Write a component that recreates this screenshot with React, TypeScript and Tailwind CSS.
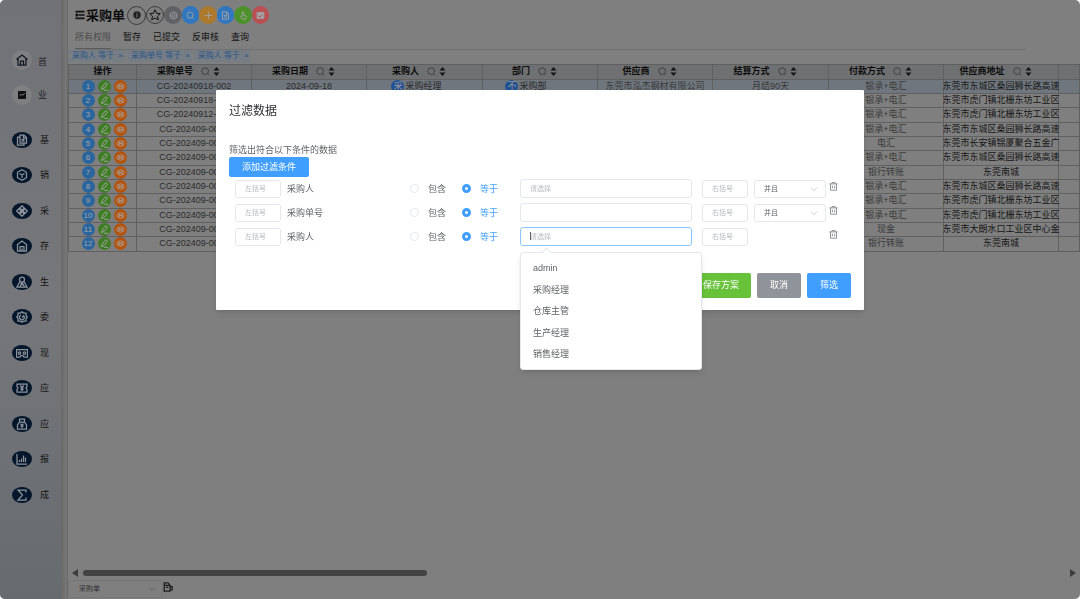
import { useState } from 'react'
import type { ReactNode } from 'react'

const rows: {
  code: string
  date?: string
  buyer?: string
  dept?: string
  supplier?: string
  settle?: string
  pay: string
  address: string
}[] = [
  {
    code: 'CG-20240918-002',
    date: '2024-09-18',
    buyer: '采购经理',
    dept: '采购部',
    supplier: '东莞市泓杰钢材有限公司',
    settle: '月结90天',
    pay: '银承+电汇',
    address: '东莞市东城区桑园狮长路高速',
  },
  { code: 'CG-20240918-001', pay: '银承+电汇', address: '东莞市虎门镇北栅东坊工业区' },
  { code: 'CG-20240912-001', pay: '银承+电汇', address: '东莞市虎门镇北栅东坊工业区' },
  { code: 'CG-202409-0009', pay: '银承+电汇', address: '东莞市东城区桑园狮长路高速' },
  { code: 'CG-202409-0008', pay: '电汇', address: '东莞市长安镇锦厦聚合五金广' },
  { code: 'CG-202409-0007', pay: '银承+电汇', address: '东莞市东城区桑园狮长路高速' },
  { code: 'CG-202409-0006', pay: '银行转账', address: '东莞南城' },
  { code: 'CG-202409-0005', pay: '银承+电汇', address: '东莞市东城区桑园狮长路高速' },
  { code: 'CG-202409-0004', pay: '银承+电汇', address: '东莞市虎门镇北栅东坊工业区' },
  { code: 'CG-202409-0003', pay: '银承+电汇', address: '东莞市虎门镇北栅东坊工业区' },
  { code: 'CG-202409-0002', pay: '现金', address: '东莞市大朗水口工业区中心金' },
  { code: 'CG-202409-0001', pay: '银行转账', address: '东莞南城' },
]

const columns = ['采购单号', '采购日期', '采购人', '部门', '供应商', '结算方式', '付款方式', '供应商地址']

const tabs = ['所有权限', '暂存', '已提交', '反审核', '查询']

const tags = ['采购人 等于', '采购单号 等于', '采购人 等于']

const menu: { label: string; icon: ReactNode }[] = [
  {
    label: '基',
    icon: (
      <>
        <path d="M8 2h8l5 5v11H8zM15 2v6h6M8 6H3v16h13v-4" />
        <path d="M11 11h6M11 14h6" />
      </>
    ),
  },
  { label: '销', icon: <path d="M12 1.5l9 5v11l-9 5-9-5v-11zM7 9l5 3 5-3M12 12v6" /> },
  {
    label: '采',
    icon: (
      <path d="M12 1.5L16.5 6 12 10.5 7.5 6zM12 13.5l4.5 4.5-4.5 4.5L7.5 18zM6 7.5l4.5 4.5L6 16.5 1.500 12zM18 7.5l4.5 4.5-4.5 4.5-4.5-4.5z" />
    ),
  },
  { label: '存', icon: <path d="M3 22V9l9-7 9 7v13zM8 22v-9h8v9M12 17v5" /> },
  {
    label: '生',
    icon: (
      <>
        <circle cx="12" cy="7" r="5" />
        <path d="M8 11L2 22h20l-6-11M12 12l-4 10M12 12l5 10M10 17h5" />
      </>
    ),
  },
  {
    label: '委',
    icon: (
      <>
        <path d="M12 1.500l3 2.500h5v5l2.500 3L20 15v5h-5l-3 2.500L9 20H4v-5l-2.500-3L4 9V4h5z" />
        <path d="M16 10a5 5 0 1 1-6-2M12 13l4-4" />
      </>
    ),
  },
  {
    label: '现',
    icon: (
      <>
        <path d="M1 5h22v15h-7l-2-3h-4l-2 3H1z" />
        <circle cx="7" cy="12" r="2.500" />
        <circle cx="17" cy="12" r="2.500" />
      </>
    ),
  },
  { label: '应', icon: <path d="M2 4h20v5l-2 3 2 3v5H2v-5l2-3-2-3zM8.500 7L12 11l3.500-4M12 11v7M9 12h6M9 15h6" /> },
  { label: '应', icon: <path d="M7 2h10v6H7zM7 8l-4 6v8h18v-8l-4-6M9 11l3 4 3-4M12 15v5M9 16h6" /> },
  { label: '报', icon: <path d="M2 2v20h20M7 18v-4M11 18v-7M15 18V5M19 18V9" /> },
  { label: '成', icon: <path d="M20 7V2H4l9 10-9 10h16v-5" /> },
]

const tools: { name: string; tone: string; icon: ReactNode }[] = [
  {
    name: '设置',
    tone: 'bg-[#5f6165]',
    icon: (
      <>
        <path d="M12 2l8.500 5v10L12 22l-8.500-5V7z" />
        <circle cx="12" cy="12" r="4" />
      </>
    ),
  },
  { name: '搜索', tone: 'bg-[#3077bf]', icon: <path d="M11 3a8 8 0 1 1 0 16 8 8 0 0 1 0-16M17 17l4 4" /> },
  { name: '新增', tone: 'bg-[#ac792d]', icon: <path d="M12 2v20M2 12h20" /> },
  { name: '单据', tone: 'bg-[#3077bf]', icon: <path d="M4 2h11l5 5v15H4zM14 2v6h6M8 12h8M8 16h8" /> },
  {
    name: '提交',
    tone: 'bg-[#4c912a]',
    icon: <path d="M9 14V4a2 2 0 0 1 4 0v7l6 2v5l-2 4H9l-5-7 2-2z" />,
  },
  {
    name: '关闭',
    tone: 'bg-[#b85054]',
    icon: (
      <>
        <path d="M3 4h18v16H3z" fill="currentColor" />
        <path d="M7 13l4 3 6-6" stroke="#b85054" />
      </>
    ),
  },
]

const options = ['admin', '采购经理', '仓库主管', '生产经理', '销售经理']

const conditions = [
  { field: '采购人', placeholder: '请选择', join: true, open: false },
  { field: '采购单号', placeholder: '', join: true, open: false },
  { field: '采购人', placeholder: '请选择', join: false, open: true },
]

function Icon({ className, width = 2, children }: { className: string; width?: number; children: ReactNode }) {
  return (
    <svg
      className={className}
      viewBox="0 0 24 24"
      fill="none"
      stroke="currentColor"
      strokeWidth={width}
      aria-hidden="true"
    >
      {children}
    </svg>
  )
}

function Sidebar() {
  return (
    <nav className="w-[61px] shrink-0 bg-linear-to-b from-[#707277] via-[#76777a] to-[#666b70] pt-[42px] text-[9px] text-[#222]">
      <a href="#home" className="flex h-[35px] items-center pl-3">
        <span className="flex size-5 items-center justify-center rounded-full bg-[#7e7f81] text-[#111820]">
          <Icon className="size-3" width={2.5}>
            <path d="M1 11L12 2l11 9M4 9v13h16V9M9 22v-8h6v8" />
          </Icon>
        </span>
        <span className="ml-1.5 pt-1.5">首</span>
      </a>
      <a href="#business" className="flex h-[35px] items-center pl-3">
        <span className="flex size-5 items-center justify-center rounded-full bg-[#7e7f81] text-[#808080]">
          <svg className="size-2" viewBox="0 0 24 24" aria-hidden="true">
            <rect width="24" height="24" rx="2" fill="#111" />
            <path d="M5 14l5-4 4 3 6-6" fill="none" stroke="currentColor" strokeWidth="3" />
          </svg>
        </span>
        <span className="ml-1.5 pt-0.5">业</span>
      </a>
      <div className="mt-[10px]">
        {menu.map((item, i) => (
          <a key={i} href={`#menu-${i}`} className="flex h-9 items-center pl-3 text-[#151515] odd:h-[35px]">
            <span className="flex h-4 w-5 items-center justify-center rounded-[50%] bg-[#04162b] text-[#8d939b]">
              <Icon className="size-3" width={2.5}>
                {item.icon}
              </Icon>
            </span>
            <span className="ml-2 pt-0.5">{item.label}</span>
          </a>
        ))}
      </div>
    </nav>
  )
}

function Toolbar() {
  return (
    <header className="px-[7px] pt-[5px]">
      <div className="flex h-5 items-center">
        <Icon className="size-[10px] text-[#111]" width={4}>
          <path d="M1 4h22M9 12h14M1 20h22M2 9l4 3-4 3" />
        </Icon>
        <h1 className="ml-px pt-px text-[13px] leading-5 font-bold text-[#0b0b0b]">采购单</h1>
        <div className="ml-0.5 flex items-center">
          <button
            type="button"
            aria-label="说明"
            className="flex size-[19px] items-center justify-center rounded-full border border-[#3c3c3c]"
          >
            <svg className="size-2" viewBox="0 0 24 24" aria-hidden="true">
              <circle cx="12" cy="12" r="11" fill="#202020" />
              <path d="M12 10v9M12 5v3" stroke="#808080" strokeWidth="3" />
            </svg>
          </button>
          <button
            type="button"
            aria-label="收藏"
            className="flex size-[18px] items-center justify-center rounded-full border border-[#3c3c3c] text-[#111]"
          >
            <Icon className="size-3 shrink-0">
              <path d="M12 1.500l3.200 7 7.300.800-5.500 5 1.600 7.500L12 18l-6.600 3.800L7 14.300l-5.500-5 7.300-.800z" />
            </Icon>
          </button>
          <div className="flex text-[#a0a0a0]">
            {tools.map((tool) => (
              <button
                key={tool.name}
                type="button"
                aria-label={tool.name}
                className={`flex h-[18px] w-[18px] items-center justify-center rounded-full even:w-[17px] ${tool.tone}`}
              >
                <Icon className="size-[9px]" width={2.5}>
                  {tool.icon}
                </Icon>
              </button>
            ))}
          </div>
        </div>
      </div>
      <div className="mr-[47px] flex gap-3 border-b border-[#707070] text-[9px] text-[#111]">
        {tabs.map((tab) => (
          <button
            key={tab}
            type="button"
            className="h-6 border-b border-transparent pt-0.5 first:border-[#5c5c5c] first:text-[#4c4c4c]"
          >
            {tab}
          </button>
        ))}
      </div>
    </header>
  )
}

function DataTable() {
  return (
    <table className="w-full table-fixed border-collapse text-center text-[9px] leading-[13px] whitespace-nowrap text-[#2b2b2b]">
      <colgroup>
        <col className="w-[68px]" />
        <col className="w-[115px]" />
        <col className="w-[115px]" />
        <col className="w-[116px]" />
        <col className="w-[115px]" />
        <col className="w-[115px]" />
        <col className="w-[116px]" />
        <col className="w-[115px]" />
        <col className="w-[115px]" />
        <col />
      </colgroup>
      <thead>
        <tr className="h-[15px] bg-[#6f7071] text-[#0c0c0c] *:border *:border-[#606060] *:p-0 *:align-top">
          <th>操作</th>
          {columns.map((name) => (
            <th key={name}>
              <span className="flex items-center justify-center pr-[11px]">
                {name}
                <Icon className="ml-2 size-[9px] text-[#333]">
                  <circle cx="11" cy="11" r="9" />
                  <path d="M18 18l4 4" />
                </Icon>
                <svg className="ml-[3px] h-[9px] w-[7px]" viewBox="0 0 7 9" fill="#151515" aria-hidden="true">
                  <path d="M3.500 0L6.500 3.500h-6zM3.500 9L.5 5.500h6z" />
                </svg>
              </span>
            </th>
          ))}
          <th />
        </tr>
      </thead>
      <tbody>
        {rows.map((row, i) => (
          <tr
            key={row.code}
            className="h-[14px] first:bg-[#70767d] nth-[3n]:h-[15px] *:border *:border-[#606060] *:p-0 *:align-top"
          >
            <td>
              <span className="flex items-center justify-center gap-[3px] pl-[3px] text-[8px] text-[#a5a5a5]">
                <span className="flex size-[13px] items-center justify-center rounded-full bg-[#2b659e]">{i + 1}</span>
                <button
                  type="button"
                  aria-label="编辑"
                  className="flex size-[13px] items-center justify-center rounded-full bg-[#3f7d24]"
                >
                  <Icon className="size-[9px]" width={2.5}>
                    <path d="M4 20l2-7L15 2l5 4-9 11zM10 22h12" />
                  </Icon>
                </button>
                <button
                  type="button"
                  aria-label="查看"
                  className="flex size-[13px] items-center justify-center rounded-full bg-[#b4530c]"
                >
                  <Icon className="size-[9px]" width={2.5}>
                    <path d="M1 12c4-9 18-9 22 0-4 9-18 9-22 0zM8 8v8M16 8v8M8 12h8" />
                  </Icon>
                </button>
              </span>
            </td>
            <td>{row.code}</td>
            <td>{row.date}</td>
            <td>
              {row.buyer && (
                <span className="flex justify-center gap-px pr-4">
                  <span className="size-[13px] rounded-full bg-[#1f4f94] text-[#9a9a9a]">采</span>
                  {row.buyer}
                </span>
              )}
            </td>
            <td>
              {row.dept && (
                <span className="flex justify-center gap-px pr-7">
                  <span className="size-[13px] rounded-full bg-[#1f4f94] text-[#9a9a9a]">不</span>
                  {row.dept}
                </span>
              )}
            </td>
            <td className="text-[#3a3a3a]">{row.supplier}</td>
            <td className="text-[#3a3a3a]">{row.settle}</td>
            <td className="text-[#3a3a3a]">{row.pay}</td>
            <td className="text-[#161616]">
              <span className="-mx-0.5 block">{row.address}</span>
            </td>
            <td />
          </tr>
        ))}
      </tbody>
    </table>
  )
}

function Chevron({ className }: { className: string }) {
  return (
    <Icon className={`pointer-events-none absolute size-2 ${className}`} width={2}>
      <path d="M2 7l10 10L22 7" />
    </Icon>
  )
}

function Condition({ index, open }: { index: number; open: boolean }) {
  const item = conditions[index]
  const [mode, setMode] = useState('eq')

  return (
    <div className="flex h-6 items-center pl-1.5">
      <input
        aria-label="左括号"
        placeholder="左括号"
        className="h-[18px] w-[46px] rounded-[3px] border border-[#e4e7ed] px-[9px] text-[7px] placeholder:text-[#b4b8c0]"
      />
      <span className="ml-1.5 w-[123px] pt-0.5">{item.field}</span>
      <label className="flex items-center gap-[9px]">
        <input
          type="radio"
          name={`mode-${index}`}
          checked={mode === 'in'}
          onChange={() => setMode('in')}
          className="size-[9px] appearance-none rounded-full border border-[#e4e7ed] checked:border-[3px] checked:border-[#409eff]"
        />
        <span className="pt-0.5">包含</span>
      </label>
      <label className={`ml-4 flex items-center gap-[9px] ${mode === 'eq' ? 'text-[#409eff]' : ''}`}>
        <input
          type="radio"
          name={`mode-${index}`}
          checked={mode === 'eq'}
          onChange={() => setMode('eq')}
          className="size-[9px] appearance-none rounded-full border border-[#e4e7ed] checked:border-[3px] checked:border-[#409eff]"
        />
        <span className="pt-0.5">等于</span>
      </label>
      <div className="relative ml-[22px] w-[172px] shrink-0">
        <input
          aria-label={item.field}
          placeholder={item.placeholder}
          className={`block h-[19px] w-full rounded-[3px] border px-[9px] text-[7px] placeholder:text-[#b4b8c0] ${
            open ? 'border-[#8cc5ff]' : 'border-[#e4e7ed]'
          }`}
        />
        {open && (
          <>
            <span className="absolute top-[5px] left-[10px] h-2 w-px bg-[#606266]" />
            <div className="absolute top-[25px] left-0 z-10 w-[182px] rounded-[3px] border border-[#e4e7ed] bg-white py-1 shadow-md">
              <span className="absolute -top-1 left-[22px] size-[7px] rotate-45 border-t border-l border-[#e4e7ed] bg-white" />
              <ul role="listbox" aria-label="采购人">
                {options.map((name) => (
                  <li
                    key={name}
                    role="option"
                    aria-selected={false}
                    className="h-[22px] px-3 leading-[22px] even:h-[21px]"
                  >
                    {name}
                  </li>
                ))}
              </ul>
            </div>
          </>
        )}
      </div>
      <input
        aria-label="右括号"
        placeholder="右括号"
        className="ml-[10px] h-[18px] w-[46px] rounded-[3px] border border-[#e4e7ed] px-[9px] text-[7px] placeholder:text-[#b4b8c0]"
      />
      <div className="relative ml-1.5 flex w-[72px] items-center">
        {item.join && (
          <>
            <select
              aria-label="连接方式"
              className="h-[18px] w-full appearance-none rounded-[3px] border border-[#e4e7ed] px-[9px] text-[7px]"
            >
              <option>并且</option>
              <option>或者</option>
            </select>
            <Chevron className="right-2 text-[#b4b8c0]" />
          </>
        )}
      </div>
      <button type="button" aria-label="删除" className="ml-[3px] pb-1 text-[#707277]">
        <Icon className="size-[9px]">
          <path d="M1 5h22M8 5V1h8v4M4 5v17h16V5M9 10v7M15 10v7" />
        </Icon>
      </button>
    </div>
  )
}

function FilterDialog() {
  return (
    <div className="fixed inset-0 flex items-start justify-center pt-[15vh]">
      <section
        role="dialog"
        aria-label="过滤数据"
        className="w-3/5 rounded-[1px] bg-white px-[13px] pb-3 text-[9px] text-[#606266] shadow-md"
      >
        <h2 className="pt-[13px] text-[12px] leading-4 text-[#303133]">过滤数据</h2>
        <p className="mt-6 leading-[14px]">筛选出符合以下条件的数据</p>
        <button type="button" className="block h-5 w-20 rounded-[2px] bg-[#409eff] pt-px text-white">
          添加过滤条件
        </button>
        <div>
          {conditions.map((item, i) => (
            <Condition key={i} index={i} open={item.open} />
          ))}
        </div>
        <div className="mt-6 flex justify-end gap-1.5 text-white">
          <button type="button" className="h-[25px] rounded-[2px] bg-[#67c23a] px-3 pt-px">
            保存方案
          </button>
          <button type="button" className="h-[25px] rounded-[2px] bg-[#909399] px-[13px] pt-px">
            取消
          </button>
          <button type="button" className="h-[25px] rounded-[2px] bg-[#409eff] px-[13px] pt-px">
            筛选
          </button>
        </div>
      </section>
    </div>
  )
}

export default function App() {
  return (
    <div className="bg-white font-['Liberation_Sans','Noto_Sans_CJK_SC',sans-serif]">
      <div className="flex min-h-screen overflow-hidden rounded-[5px] bg-[#7f7f7f]">
        <Sidebar />
        <div className="w-[7px] shrink-0 border-r border-dotted border-[#686868] bg-linear-to-r from-[#696969] to-[#787878]" />
        <main className="flex min-w-0 flex-1 flex-col">
          <Toolbar />
          <div className="mb-[2px] flex gap-0.5 text-[8px] leading-[12px] text-[#2b5685]">
            {tags.map((tag, i) => (
              <span key={i} className="flex rounded-[2px] bg-[#767d85] pr-0.5 pl-1">
                {tag}
                <button type="button" aria-label="移除" className="ml-1">
                  ×
                </button>
              </span>
            ))}
          </div>
          <DataTable />
          <div className="mt-auto flex items-center px-1">
            <svg className="h-2 w-1.5" viewBox="0 0 6 8" fill="#3c3c3c" aria-hidden="true">
              <path d="M6 0v8L0 4z" />
            </svg>
            <div className="mx-[5px] flex-1">
              <div className="h-1.5 w-[35%] rounded-full bg-[#434343]" />
            </div>
            <svg className="h-2 w-1.5" viewBox="0 0 6 8" fill="#3c3c3c" aria-hidden="true">
              <path d="M0 0v8l6-4z" />
            </svg>
          </div>
          <footer className="mt-[3px] mb-px flex items-center">
            <div className="relative flex w-[95px] items-center">
              <select
                aria-label="方案"
                className="h-[18px] w-full appearance-none rounded-[3px] border border-[#777] px-[10px] text-[7px] text-[#303133]"
              >
                <option>采购单</option>
              </select>
              <Chevron className="right-[7px] text-[#555]" />
            </div>
            <button type="button" aria-label="保存" className="pb-1 text-[#1c1c1c]">
              <Icon className="size-[10px]" width={3}>
                <path d="M3 8h14v14H3zM3 8V2h9l5 6M17 11h5v8h-5M7 13h6" />
              </Icon>
            </button>
          </footer>
        </main>
      </div>
      <FilterDialog />
    </div>
  )
}
